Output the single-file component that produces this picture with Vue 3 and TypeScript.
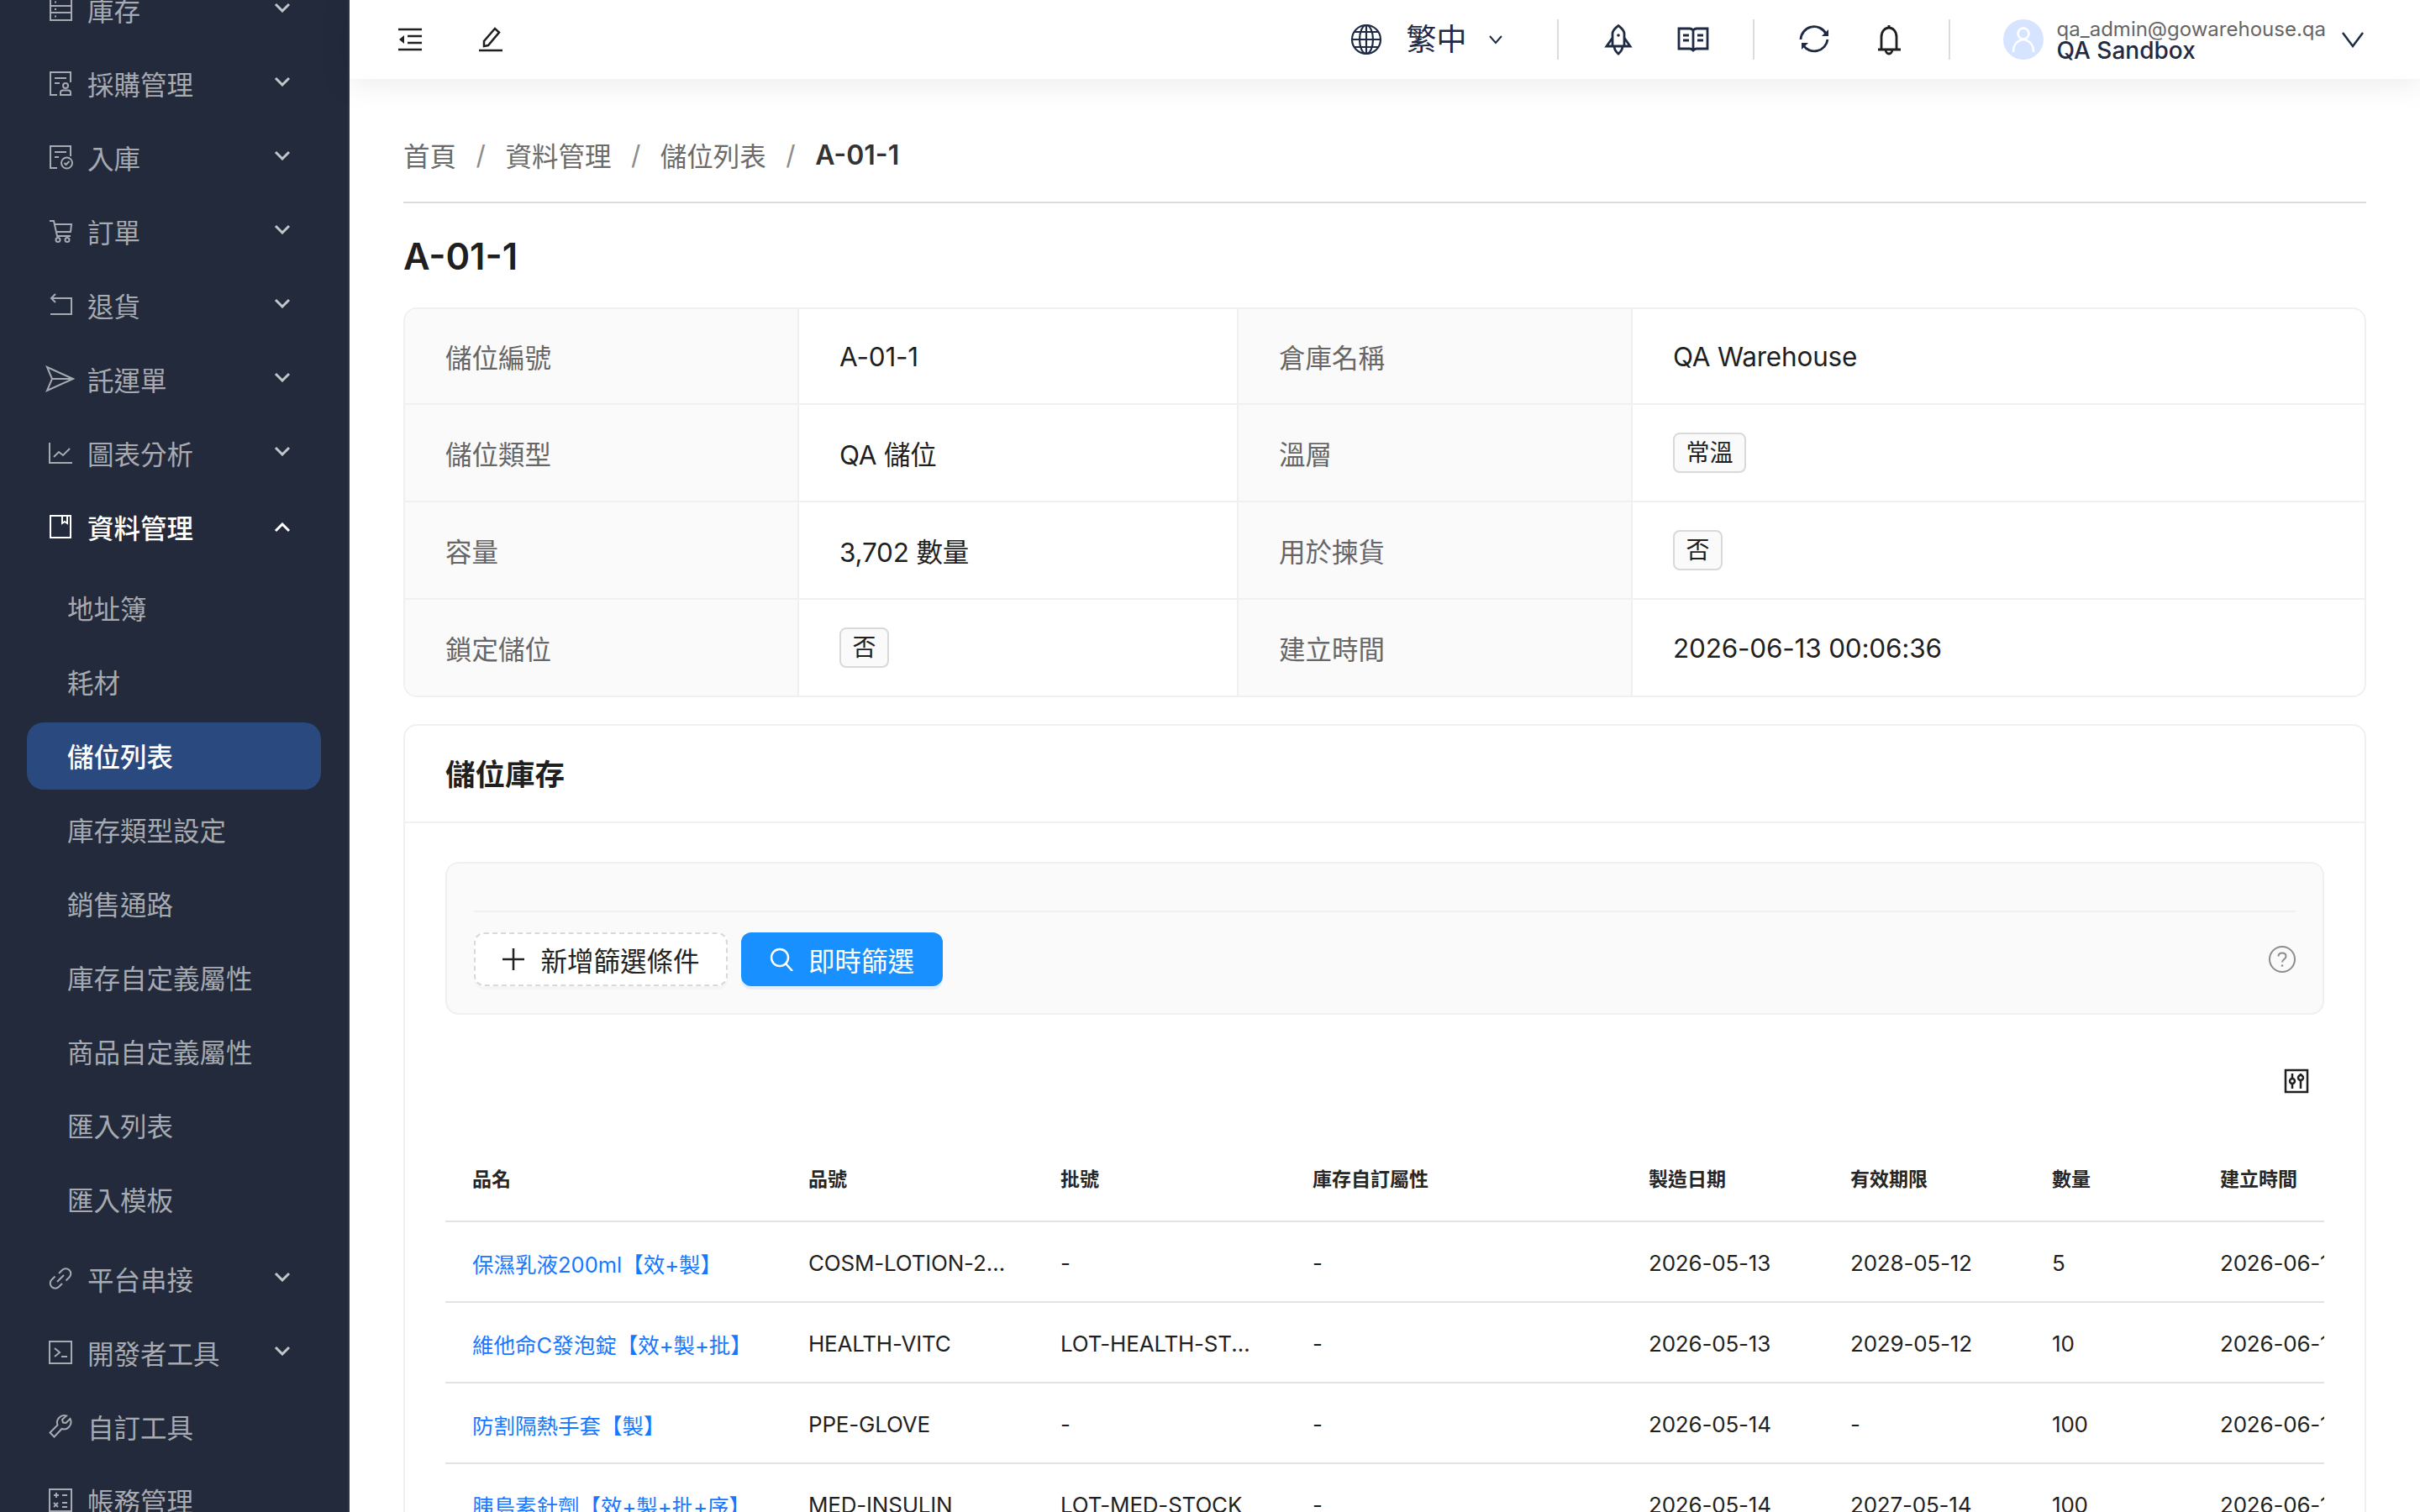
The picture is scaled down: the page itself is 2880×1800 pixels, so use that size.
<script setup lang="ts">
interface MenuItem {
  label: string
  icon: string
  arrow?: boolean
}

const icons: Record<string, string> = {
  stock: 'M2 1h25v26H2z M2 10h25 M2 18h25 M7 5.500h2 M7 14h2 M7 22.500h2',
  purchase: 'M10 28H2V1h24v12 M7 8h14 M7 14h6 M20 14a3 3 0 1 1 0 6a3 3 0 1 1 0-6z M14 28v-3c0-1.500 1-2.500 3-2.500h6c2 0 3 1 3 2.500v3z',
  inbound: 'M10 27H2V1h24v12 M7 8h14 M7 14h5 M21.500 14.500a6.500 6.500 0 1 1 0 13a6.500 6.500 0 1 1 0-13z M18.500 21l2 2 4-4',
  order: 'M1 2h5l4 18h16 M7 6h20l-1 9H9 M11 22a2.500 2.500 0 1 1 0 5a2.500 2.500 0 1 1 0-5z M22 22a2.500 2.500 0 1 1 0 5a2.500 2.500 0 1 1 0-5z',
  returns: 'M8 1 3 6l5 5 M3 6h24v19H2',
  ship: 'M-2 0 29 14-2 28 4 14z M4 14h25',
  chart: 'M1 2v24h27 M6 19l6-6 5 4 8-8',
  data: 'M2 1h24v26H2z M16 1v9l3-2 3 2V1',
  link: 'M12 8l4-4a6 6 0 0 1 8.500 8.500l-4 4 M16 20l-4 4a6 6 0 0 1-8.500-8.500l4-4 M10 18l8-8',
  dev: 'M1 1h26v26H1z M7 9l6 5-6 5 M15 19h7',
  tool: 'M25.500 5l-5 5-3.500-.5-1-3.500 5-4.500a8.500 8.500 0 0 0-10.500 11L1.500 21.500 6.500 26.500l9-9.500A8.500 8.500 0 0 0 25.500 5z',
  bill: 'M1 1h26v26H1z M6 8h6 M9 5v6 M16 8h6 M6 17l5 5 M11 17l-5 5 M16 17h6 M16 22h6',
}

const menuTop: MenuItem[] = [
  { label: '庫存', icon: 'stock', arrow: true },
  { label: '採購管理', icon: 'purchase', arrow: true },
  { label: '入庫', icon: 'inbound', arrow: true },
  { label: '訂單', icon: 'order', arrow: true },
  { label: '退貨', icon: 'returns', arrow: true },
  { label: '託運單', icon: 'ship', arrow: true },
  { label: '圖表分析', icon: 'chart', arrow: true },
]

const subMenu = ['地址簿', '耗材', '儲位列表', '庫存類型設定', '銷售通路', '庫存自定義屬性', '商品自定義屬性', '匯入列表', '匯入模板']

const menuBottom: MenuItem[] = [
  { label: '平台串接', icon: 'link', arrow: true },
  { label: '開發者工具', icon: 'dev', arrow: true },
  { label: '自訂工具', icon: 'tool' },
  { label: '帳務管理', icon: 'bill' },
]

const crumbs = ['首頁', '資料管理', '儲位列表']

const columns = [
  { title: '品名', width: 400 },
  { title: '品號', width: 300 },
  { title: '批號', width: 300 },
  { title: '庫存自訂屬性', width: 400 },
  { title: '製造日期', width: 240 },
  { title: '有效期限', width: 240 },
  { title: '數量', width: 200 },
  { title: '建立時間', width: 400 },
]

const rows = [
  ['保濕乳液200ml【效+製】', 'COSM-LOTION-200ML', '-', '-', '2026-05-13', '2028-05-12', '5', '2026-06-13 00:06:36'],
  ['維他命C發泡錠【效+製+批】', 'HEALTH-VITC', 'LOT-HEALTH-STOCK', '-', '2026-05-13', '2029-05-12', '10', '2026-06-13 00:06:36'],
  ['防割隔熱手套【製】', 'PPE-GLOVE', '-', '-', '2026-05-14', '-', '100', '2026-06-13 00:06:36'],
  ['胰島素針劑【效+製+批+序】', 'MED-INSULIN', 'LOT-MED-STOCK', '-', '2026-05-14', '2027-05-14', '100', '2026-06-13 00:06:36'],
]
</script>

<template>
  <div class="app">
    <aside class="sidebar">
      <nav class="menu">
        <a v-for="item in menuTop" :key="item.label" class="menu-item">
          <svg class="menu-icon" viewBox="0 0 28 28"><path :d="icons[item.icon]" /></svg>
          <span>{{ item.label }}</span>
          <svg v-if="item.arrow" class="menu-arrow" viewBox="0 0 20 12"><path d="M2 2l8 8 8-8" /></svg>
        </a>

        <a class="menu-item menu-item--open">
          <svg class="menu-icon" viewBox="0 0 28 28"><path :d="icons.data" /></svg>
          <span>資料管理</span>
          <svg class="menu-arrow menu-arrow--up" viewBox="0 0 20 12"><path d="M2 10l8-8 8 8" /></svg>
        </a>
        <div class="submenu">
          <a
            v-for="label in subMenu"
            :key="label"
            class="submenu-item"
            :class="{ 'submenu-item--active': label === '儲位列表' }"
          >{{ label }}</a>
        </div>

        <a v-for="item in menuBottom" :key="item.label" class="menu-item">
          <svg class="menu-icon" viewBox="0 0 28 28"><path :d="icons[item.icon]" /></svg>
          <span>{{ item.label }}</span>
          <svg v-if="item.arrow" class="menu-arrow" viewBox="0 0 20 12"><path d="M2 2l8 8 8-8" /></svg>
        </a>
      </nav>
    </aside>

    <div class="main">
      <header class="topbar">
        <div class="topbar-left">
          <svg class="tool-icon" viewBox="0 0 28 28">
            <path d="M0 2h28 M0 26h28 M11 10h17 M11 18h17" />
            <path class="solid" d="M1 14l6-5v10z" />
          </svg>
          <svg class="tool-icon" viewBox="0 0 28 28">
            <path d="M0 27h28 M6 22v-6L19 1l5 4.500L11 21z" />
          </svg>
        </div>

        <div class="topbar-right">
          <div class="lang">
            <svg class="head-icon head-icon--thin" viewBox="0 0 36 36">
              <circle cx="18" cy="18" r="17" />
              <ellipse cx="18" cy="18" rx="8" ry="17" />
              <path d="M18 1v34 M1 18h34 M4 9h28 M4 27h28" />
            </svg>
            <span class="lang-label">繁中</span>
            <svg class="lang-arrow" viewBox="0 0 18 12"><path d="M2 2l7 8 7-8" /></svg>
          </div>

          <div class="head-group">
            <svg class="head-icon" viewBox="0 0 36 36">
              <path d="M18 1.500c3.500 3 7 5 7 9.500v15H11V11c0-4.500 3.500-6.500 7-9.500z M11 16L4 26h28l-7-10 M13 26c0 5 3 7 5 9 2-2 5-4 5-9" />
              <circle class="solid" cx="18" cy="13" r="1.800" />
            </svg>
            <svg class="head-icon" viewBox="0 0 36 36">
              <path d="M1 5h13c2 0 3 1 4 2 1-1 2-2 4-2h13v24H22c-2 0-3 1-4 2-1-1-2-2-4-2H1z M18 7v22 M6 13h7 M6 19h7 M23 13h7 M23 19h7" />
            </svg>
          </div>

          <div class="head-group">
            <svg class="head-icon" viewBox="0 0 36 36">
              <path d="M2 18A16 16 0 0 1 32 11 M34 18A16 16 0 0 1 5 25" />
              <path class="solid" d="M35 6v8h-8z M3 30v-8h8z" />
            </svg>
            <svg class="head-icon head-icon--dark" viewBox="0 0 36 36">
              <path d="M18 1v3 M9 30V15c0-6.500 4-11 9-11s9 4.500 9 11v15 M5 30h27 M14 30c0 3 2 5 4 5s4-2 4-5" />
            </svg>
          </div>

          <div class="user">
            <div class="avatar">
              <svg viewBox="0 0 48 48">
                <circle cx="24" cy="17" r="6.500" />
                <path d="M12 39c0-9 5-14 12-15 7 1 12 6 12 15" />
              </svg>
            </div>
            <div class="user-text">
              <div class="user-email">qa_admin@gowarehouse.qa</div>
              <div class="user-name">QA Sandbox</div>
            </div>
            <svg class="user-arrow" viewBox="0 0 28 20"><path d="M2 2l12 16L26 2" /></svg>
          </div>
        </div>
      </header>

      <main class="content">
        <div class="breadcrumb">
          <template v-for="crumb in crumbs" :key="crumb">
            <span>{{ crumb }}</span>
            <span class="breadcrumb-sep">/</span>
          </template>
          <span class="breadcrumb-current">A-01-1</span>
        </div>

        <h1 class="page-title">A-01-1</h1>

        <section class="info">
          <div class="info-label">儲位編號</div>
          <div class="info-value">A-01-1</div>
          <div class="info-label">倉庫名稱</div>
          <div class="info-value">QA Warehouse</div>

          <div class="info-label">儲位類型</div>
          <div class="info-value">QA 儲位</div>
          <div class="info-label">溫層</div>
          <div class="info-value"><span class="tag">常溫</span></div>

          <div class="info-label">容量</div>
          <div class="info-value">3,702 數量</div>
          <div class="info-label">用於揀貨</div>
          <div class="info-value"><span class="tag">否</span></div>

          <div class="info-label">鎖定儲位</div>
          <div class="info-value"><span class="tag">否</span></div>
          <div class="info-label">建立時間</div>
          <div class="info-value">2026-06-13 00:06:36</div>
        </section>

        <section class="card">
          <div class="card-head">儲位庫存</div>
          <div class="card-body">
            <div class="filter">
              <div class="filter-top"></div>
              <div class="filter-row">
                <button class="btn btn--dashed">
                  <svg class="btn-icon" viewBox="0 0 28 28"><path d="M14 1v26 M1 14h26" /></svg>
                  新增篩選條件
                </button>
                <button class="btn btn--primary">
                  <svg class="btn-icon" viewBox="0 0 28 28">
                    <circle cx="12" cy="12" r="10" />
                    <path d="M19 19l8 9" />
                  </svg>
                  即時篩選
                </button>
                <svg class="help" viewBox="0 0 32 32">
                  <circle cx="16" cy="16" r="15" />
                  <path d="M11.500 12.500c0-2.500 2-4 4.500-4s4.500 1.500 4.500 4c0 3.500-4.500 3.500-4.500 7" />
                  <circle class="solid" cx="16" cy="23.500" r="1.300" />
                </svg>
              </div>
            </div>

            <div class="table-tools">
              <svg class="column-icon" viewBox="0 0 30 30">
                <path d="M2 2h26v26H2z M10 6v6 M10 18v6 M20 6v2 M20 14v10" />
                <circle cx="10" cy="15" r="3" />
                <circle cx="20" cy="11" r="3" />
              </svg>
            </div>

            <div class="table-wrap">
              <table class="table">
                <colgroup>
                  <col v-for="col in columns" :key="col.title" :style="{ width: col.width + 'px' }" />
                </colgroup>
                <thead>
                  <tr>
                    <th v-for="col in columns" :key="col.title">{{ col.title }}</th>
                  </tr>
                </thead>
                <tbody>
                  <tr v-for="row in rows" :key="row[1]">
                    <td v-for="(cell, i) in row" :key="i" :class="{ link: i === 0 }">{{ cell }}</td>
                  </tr>
                </tbody>
              </table>
            </div>
          </div>
        </section>
      </main>
    </div>
  </div>
</template>

<style scoped>
.app {
  display: flex;
  width: 2880px;
  height: 1800px;
  overflow: hidden;
  background: #fff;
  font-family: Inter, 'Noto Sans CJK TC', sans-serif;
  color: #1f1f1f;
}

/* sidebar */
.sidebar {
  flex: 0 0 416px;
  background: #232a3b;
  border-right: 2px solid #2d3445;
  box-sizing: border-box;
  overflow: hidden;
}

.menu {
  display: flex;
  flex-direction: column;
  gap: 8px;
  margin-top: -29px;
}

.menu-item {
  display: flex;
  align-items: center;
  height: 80px;
  padding-left: 58px;
  font-size: 31.5px;
  color: #a7aab1;
}

.menu-item--open {
  color: #fff;
  font-weight: 500;
}

.menu-icon {
  width: 28px;
  height: 28px;
  margin-right: 18px;
  overflow: visible;
  flex: none;
  fill: none;
  stroke: currentColor;
  stroke-width: 2;
}

.menu-arrow {
  width: 20px;
  height: 12px;
  margin-left: auto;
  margin-right: 68px;
  margin-bottom: 4px;
  fill: none;
  stroke: #c3c5ca;
  stroke-width: 3;
}

.menu-arrow--up {
  stroke: #fff;
  margin-bottom: -2px;
}

.submenu {
  display: flex;
  flex-direction: column;
  gap: 8px;
  padding: 9px 0 6px;
}

.submenu-item {
  height: 80px;
  margin: 0 32px;
  padding-left: 48px;
  border-radius: 20px;
  font-size: 31.5px;
  line-height: 84px;
  color: #a7aab1;
}

.submenu-item--active {
  background: #2a4a7f;
  color: #fff;
  font-weight: 500;
}

/* top bar */
.main {
  flex: 1;
  min-width: 0;
  display: flex;
  flex-direction: column;
}

.topbar {
  position: relative;
  z-index: 1;
  display: flex;
  align-items: center;
  justify-content: space-between;
  flex: 0 0 94px;
  padding: 0 66px 0 58px;
  background: #fff;
  box-shadow: 0 4px 40px rgba(0, 0, 0, 0.09);
}

.topbar-left {
  display: flex;
  align-items: center;
  gap: 68px;
}

.tool-icon {
  width: 28px;
  height: 28px;
  overflow: visible;
  fill: none;
  stroke: #1f1f1f;
  stroke-width: 2.500;
}

.tool-icon .solid {
  fill: #1f1f1f;
  stroke: none;
}

.topbar-right {
  display: flex;
  align-items: center;
  color: #1f2a44;
}

.head-icon {
  width: 36px;
  height: 36px;
  overflow: visible;
  fill: none;
  stroke: #1f2a44;
  stroke-width: 2.800;
}

.head-icon .solid {
  fill: #1f2a44;
  stroke: none;
}

.head-icon--thin {
  stroke-width: 2.200;
}

.head-icon--dark {
  stroke: #1f1f1f;
}

.lang {
  display: flex;
  align-items: center;
  padding-right: 64px;
}

.lang-label {
  margin-left: 30px;
  font-size: 36px;
  line-height: 48px;
}

.lang-arrow {
  width: 18px;
  height: 12px;
  margin-left: 25px;
  fill: none;
  stroke: #1f2a44;
  stroke-width: 2;
}

.head-group {
  display: flex;
  align-items: center;
  gap: 53px;
  height: 48px;
  padding: 0 53px;
  border-left: 2px solid #dcdcdc;
}

.user {
  display: flex;
  align-items: center;
  height: 48px;
  padding-left: 63px;
  border-left: 2px solid #dcdcdc;
}

.avatar {
  width: 48px;
  height: 48px;
  border-radius: 50%;
  background: #d6e4ff;
}

.avatar svg {
  display: block;
  fill: none;
  stroke: #fff;
  stroke-width: 2.500;
}

.user-text {
  margin-left: 16px;
}

.user-email {
  font-size: 24px;
  line-height: 26px;
  color: #666;
}

.user-name {
  font-size: 28px;
  line-height: 24px;
  font-weight: 500;
  color: #1f2a44;
}

.user-arrow {
  width: 28px;
  height: 20px;
  margin-left: 18px;
  fill: none;
  stroke: #1f2a44;
  stroke-width: 2.500;
}

/* page */
.content {
  flex: 1;
  min-height: 0;
  padding: 0 64px;
}

.breadcrumb {
  display: flex;
  align-items: center;
  gap: 23.500px;
  height: 148px;
  padding-top: 38px;
  box-sizing: border-box;
  border-bottom: 2px solid #dcdcdc;
  padding-bottom: 4px;
  font-size: 31.5px;
  color: #6b6b6b;
}

.breadcrumb-sep {
  color: #8c8c8c;
}

.breadcrumb-current {
  font-size: 32px;
  font-weight: 600;
  color: #333;
}

.page-title {
  height: 124px;
  margin: 0;
  font-size: 43.5px;
  line-height: 126px;
  font-weight: 600;
  color: #1f1f1f;
}

.info {
  display: grid;
  grid-template-columns: 469px 523px 469px 1fr;
  grid-template-rows: 114px 116px 116px 114px;
  border: 2px solid #f0f0f0;
  border-radius: 16px;
  overflow: hidden;
  box-sizing: border-box;
  height: 464px;
  font-size: 31.5px;
  letter-spacing: -0.2px;
}

.info-label,
.info-value {
  display: flex;
  align-items: center;
  padding-left: 48px;
  border-bottom: 2px solid #f0f0f0;
}

.info-label {
  background: #fafafa;
  color: #666;
  border-right: 2px solid #f0f0f0;
  letter-spacing: 0;
}

.info-value {
  color: #1f1f1f;
  border-right: 2px solid #f0f0f0;
}

.info-value:nth-child(4n) {
  border-right: none;
}

.info > :nth-last-child(-n + 4) {
  border-bottom: none;
}

.tag {
  height: 48px;
  padding: 0 13.500px;
  box-sizing: border-box;
  border: 2px solid #d9d9d9;
  border-radius: 8px;
  background: #fafafa;
  font-size: 28px;
  line-height: 44px;
  letter-spacing: 0;
}

.card {
  margin-top: 32px;
  border: 2px solid #f0f0f0;
  border-bottom: none;
  border-radius: 16px 16px 0 0;
}

.card-head {
  height: 114px;
  padding-left: 48px;
  border-bottom: 2px solid #f0f0f0;
  font-size: 35.5px;
  line-height: 118px;
  font-weight: 600;
}

.card-body {
  padding: 46px 48px 0;
}

.filter {
  padding: 0 32px;
  border: 2px solid #f0f0f0;
  border-radius: 16px;
  background: #fafafa;
}

.filter-top {
  height: 56px;
  border-bottom: 2px solid #f0f0f0;
}

.filter-row {
  display: flex;
  align-items: center;
  gap: 16px;
  padding: 24px 0 32px;
}

.btn {
  display: inline-flex;
  align-items: center;
  justify-content: center;
  height: 64px;
  border-radius: 12px;
  font-family: inherit;
  font-size: 31.5px;
}

.btn-icon {
  width: 28px;
  height: 28px;
  margin-right: 18px;
  fill: none;
  stroke: currentColor;
  stroke-width: 2.500;
}

.btn--dashed {
  width: 302px;
  border: 2px dashed #d9d9d9;
  background: #fff;
  color: #222;
  box-shadow: 0 4px 0 rgba(0, 0, 0, 0.02);
}

.btn--primary {
  width: 240px;
  border: none;
  background: #1890ff;
  color: #fff;
  box-shadow: 0 4px 0 rgba(5, 145, 255, 0.1);
}

.help {
  width: 32px;
  height: 32px;
  margin-left: auto;
  fill: none;
  stroke: #8c8c8c;
  stroke-width: 2;
}

.help .solid {
  fill: #8c8c8c;
  stroke: none;
}

.table-tools {
  display: flex;
  justify-content: flex-end;
  padding: 64px 18px 49px 0;
}

.column-icon {
  display: block;
  width: 30px;
  height: 30px;
  fill: none;
  stroke: #1f1f1f;
  stroke-width: 2.500;
}

.table-wrap {
  overflow: hidden;
}

.table {
  width: 2480px;
  table-layout: fixed;
  border-collapse: collapse;
}

.table th,
.table td {
  padding: 0 32px;
  text-align: left;
  white-space: nowrap;
  overflow: hidden;
  text-overflow: ellipsis;
  border-bottom: 2px solid #e2e2e2;
}

.table th {
  height: 102px;
  font-size: 23px;
  font-weight: 600;
  color: #262626;
}

.table td {
  height: 92px;
  padding-top: 2px;
  font-size: 26px;
  letter-spacing: -0.2px;
  color: #1f1f1f;
}

.table td.link {
  padding-right: 0;
  font-size: 25.5px;
  letter-spacing: 0;
  color: #1677ff;
}
</style>

<style>
html,
body {
  margin: 0;
  background: #fff;
}
</style>
